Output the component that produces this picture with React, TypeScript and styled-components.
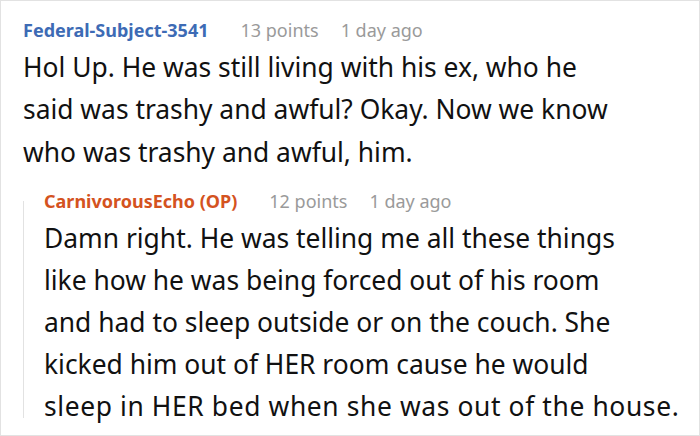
import React from 'react';
import styled, { createGlobalStyle } from 'styled-components';

const GlobalStyle = createGlobalStyle`
  html, body {
    margin: 0;
    padding: 0;
    background: #ffffff;
  }
  body {
    font-family: 'Noto Sans', 'Open Sans', sans-serif;
  }
`;

const Frame = styled.div`
  box-sizing: border-box;
  width: 700px;
  height: 436px;
  border: 1px solid #e2e2e2;
  background: #ffffff;
  padding: 16.5px 0 0 22px;
  overflow: hidden;
`;

const Comment = styled.div``;

const Reply = styled.div`
  display: flex;
  margin-top: 16px;
`;

const Rail = styled.div`
  align-self: flex-start;
  width: 1px;
  height: 217px;
  background: #e2e2e2;
  margin: 11.5px 20px 0 0;
`;

const Thread = styled.div`
  flex: 1;
`;

const Meta = styled.div`
  display: flex;
  align-items: baseline;
  font-size: 18px;
  line-height: 24px;
`;

const Author = styled.span<{ $op?: boolean }>`
  font-weight: 700;
  color: ${(p) => (p.$op ? '#d4531f' : '#3d6bb5')};
  margin-right: 32px;
`;

const Info = styled.span`
  color: #9a9a9a;
  margin-right: 22px;
`;

const Body = styled.div<{ $gap: number; $lh: number }>`
  font-size: 26.4px;
  line-height: ${(p) => p.$lh}px;
  color: #111111;
  margin-top: ${(p) => p.$gap}px;
`;

const Line = styled.div<{ $track?: number }>`
  white-space: nowrap;
  letter-spacing: ${(p) => p.$track ?? 0}px;
`;

const first = [
  'Hol Up. He was still living with his ex, who he',
  'said was trashy and awful? Okay. Now we know',
  'who was trashy and awful, him.',
];

const second = [
  'Damn right. He was telling me all these things',
  'like how he was being forced out of his room',
  'and had to sleep outside or on the couch. She',
  'kicked him out of HER room cause he would',
  'sleep in HER bed when she was out of the house.',
];

const App = () => (
  <>
    <GlobalStyle />
    <Frame>
      <Comment>
        <Meta>
          <Author>Federal-Subject-3541</Author>
          <Info>13 points</Info>
          <Info>1 day ago</Info>
        </Meta>
        <Body $gap={4} $lh={42.5}>
          {first.map((l) => (
            <Line key={l}>{l}</Line>
          ))}
        </Body>
      </Comment>
      <Reply>
        <Rail />
        <Thread>
          <Meta>
            <Author $op>CarnivorousEcho (OP)</Author>
            <Info>12 points</Info>
            <Info>1 day ago</Info>
          </Meta>
          <Body $gap={4.3} $lh={42}>
            {second.map((l, i) => (
              <Line key={l} $track={i === second.length - 1 ? 0.62 : 0}>
                {l}
              </Line>
            ))}
          </Body>
        </Thread>
      </Reply>
    </Frame>
  </>
);

export default App;
